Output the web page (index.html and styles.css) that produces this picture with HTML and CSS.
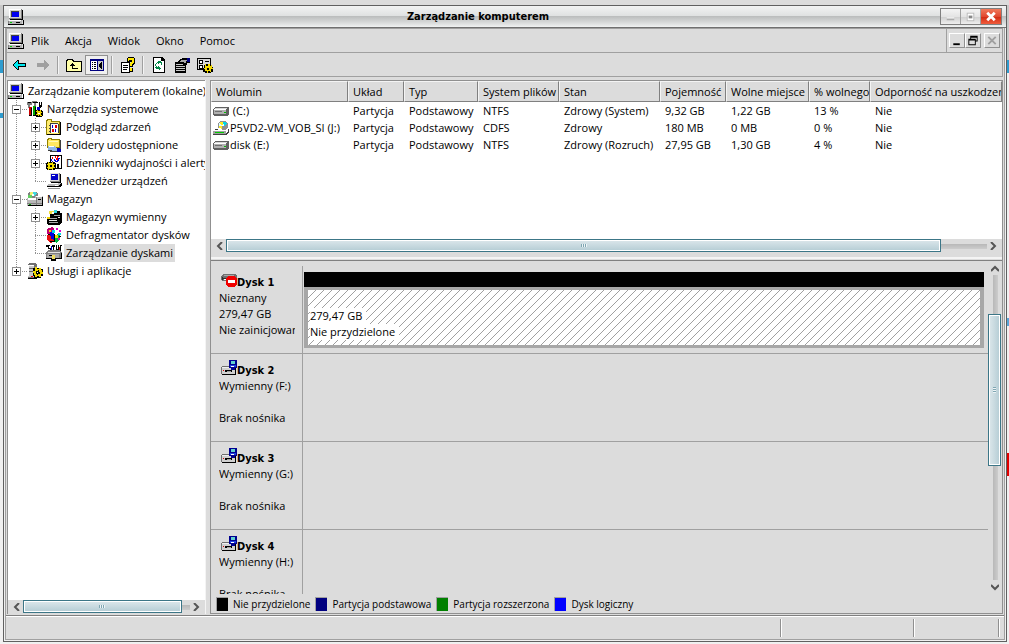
FILE: index.html
```
<!DOCTYPE html>
<html lang="pl">
<head>
<meta charset="utf-8">
<title>Zarządzanie komputerem</title>
<link rel="stylesheet" href="styles.css">
</head>
<body>
<svg class="defs" aria-hidden="true">
  <symbol id="pc" viewBox="0 0 16 16">
    <path fill="#808080" d="M1 0h13v10H1z"/><path fill="#d0d0cc" d="M1 0h12v9H1z"/><path fill="#fff" d="M1 0h12v1H2v8H1z"/><path fill="#000" d="M14 1h1v10H2v-1h12z"/>
    <path fill="#404040" d="M3 2h8v6H3z"/><path fill="#0000f0" d="M4 3h7v5H4z"/><path fill="#b4b4b4" d="M1 11h13v4H0v-3z"/>
    <path fill="#fff" d="M1 11h12v1H1z"/><path fill="#000" d="M0 15h14l1-1v-3h1v4l-1 1H0zM8 13h4v1H8z"/><path fill="#0c0" d="M2 13h2v1H2z"/><path fill="#808080" d="M0 12h1v3H0z"/>
  </symbol>
  <symbol id="tools" viewBox="0 0 16 16">
    <path fill="#808080" d="M0 1h5v3H3v3H1V4H0zM5 0h5v2H9v4H7V2H5z"/><path fill="#000" d="M1 1h3v1H1zM6 1h5v1H6zM12 1h1v3h1V1h1v4l-2 2h-1V5z"/>
    <path fill="#c00" d="M2 6h3v8H2z"/><path fill="#0a0" d="M6 5h3v9H6z"/><path fill="#00c" d="M10 6h3v5h-3z"/><path fill="#000" d="M4 7h1v8H2v-1h2zM8 6h1v9H6v-1h2z"/>
    <path fill="#000" d="M9 9h6v1h1v5h-1v1H9v-1H8v-5h1z"/><path fill="#e8d000" d="M10 9h1v1h2V9h1v2h1v1h-1v2h1v1h-2v-1h-1v1h-1v-1H9v-1h1v-2H9v-1h1z"/><path fill="#fff" d="M11 12h2v1h-2z"/>
  </symbol>
  <symbol id="events" viewBox="0 0 16 16">
    <path fill="#908000" d="M0 1h1V0h5v2h8v14H0z"/><path fill="#ffec70" d="M1 2h1V1h3v2h8v12H1z"/><path fill="#000" d="M14 3h1v13H1v-1h13z"/>
    <path fill="#fff" d="M4 5h8v9H4z"/><path fill="#404040" d="M4 4h8v1H5v9H4zM3 6h1v1H3zM3 9h1v1H3zM3 12h1v1H3zM12 5h1v9h-1z"/><path fill="#e00000" d="M9 6h2v3H9zM6 10h2v3H6z"/><path fill="#0000d0" d="M6 6h1v3H6zM9 10h1v3H9z"/>
  </symbol>
  <symbol id="shared" viewBox="0 0 16 16">
    <path fill="#908000" d="M1 2h1V1h4v1h8v9H1z"/><path fill="#ffe860" d="M2 3h1V2h2v1h8v7H2z"/><path fill="#fff9b8" d="M3 4h9v1H3z"/>
    <path fill="#0000b0" d="M11 11h4v4h-4z"/><path fill="#8fb8e8" d="M2 9h6l3 2v3l-2 1H6l-4-2z"/><path fill="#fff" d="M3 9h5v1H3z"/><path fill="#404040" d="M2 13h3l1 1h5v1H5l-3-1zM14 3h1v9h-1z"/>
  </symbol>
  <symbol id="perf" viewBox="0 0 16 16">
    <path fill="#000" d="M4 0h12v14H4z"/><path fill="#fff" d="M5 1h10v12H5z"/><path fill="#0000e0" d="M5 4h1v2h1v1H6V6H5zM8 4h1v1h1v1h1V4h1V3h2v1h-1v2h-1v1H9V6H8z"/>
    <path fill="#e00" d="M6 2h1v2H6zM9 1h1v2h1V1h2v1h-1v3h-2V3H9z"/><path fill="#000" d="M1 7h8v1h1v6H9v1H1v-1H0V8h1z"/>
    <path fill="#f0dc00" d="M2 7h1v1h3V7h1v2h2v1H8v2h1v1H7v2H6v-1H3v1H2v-2H1v-1h1v-2H1V9h1z"/><path fill="#000" d="M4 10h2v2H4zM11 9h2v4h-2z"/>
  </symbol>
  <symbol id="device" viewBox="0 0 16 16">
    <path fill="#808080" d="M4 0h10v9H4z"/><path fill="#dcdcdc" d="M4 0h9v8H4z"/><path fill="#0000c8" d="M5 1h7v6H5z"/><path fill="#fff" d="M6 2h3v1H6z"/><path fill="#000" d="M14 1h1v9H5V9h9z"/>
    <path fill="#b8b8b8" d="M3 10h12l-2 3H1z"/><path fill="#000" d="M0 13h13l2-3h1v2l-2 2H1z"/><path fill="#fff" d="M3 10h9v1H3zM9 12h3v1H9z"/><path fill="#909090" d="M2 15h12v1H2z"/>
  </symbol>
  <symbol id="storage" viewBox="0 0 16 16">
    <path fill="#808080" d="M2 1h7l2 2v4H1V3z"/><path fill="#f4ef70" d="M3 1h3v4H3z"/><path fill="#40d8e0" d="M6 1h3l1 2-3 2z"/><path fill="#60d060" d="M1 4h4v3H1z"/><path fill="#fff" d="M5 3h2v2H5z"/>
    <path fill="#b8b8b8" d="M0 7h8V5h8v10H0z"/><path fill="#fff" d="M1 7h8V5h6v1h-5v3H1z"/><path fill="#808080" d="M0 12h16v1H0zM9 6h1v8H9z"/><path fill="#000" d="M1 15h15V6h-1v8H1zM11 8h3v1h-3z"/><path fill="#0a0" d="M2 13h2v1H2z"/>
  </symbol>
  <symbol id="removable" viewBox="0 0 16 16">
    <path fill="#000" d="M5 2h9v2h2v9l-2 3H2l-1-3V9h3V5z"/><path fill="#f0dc40" d="M3 2h5v3H3z"/><path fill="#30d8e0" d="M8 1h3v3H8z"/><path fill="#fff" d="M6 3h2v2H6z"/>
    <path fill="#a8a8a8" d="M8 6h6v1H8zM4 9h7v1H4zM3 13h9v1H3z"/><path fill="#e8e8e8" d="M3 11h8v1H3zM12 8h2v1h-2z"/><path fill="#f0d000" d="M1 8h3v2H1z"/>
  </symbol>
  <symbol id="defrag" viewBox="0 0 16 16">
    <path fill="#c00070" d="M1 2l5-2 2 2v5l-5 2-2-2z"/><path fill="#e81010" d="M1 8l4-2 4 2v6l-4 2-4-3z"/><path fill="#0000e0" d="M4 5h4v8l-3-1z"/><path fill="#00b840" d="M8 9l4-2 2 2v4l-4 3-2-2z"/>
    <path fill="#00d8e8" d="M6 3h3v3H6zM12 6h3v2h-3z"/><path fill="#f0e000" d="M9 8h3v3H9zM3 3h2v2H3z"/><path fill="#e000d0" d="M10 1h2v2h-2zM13 3h2v2h-2zM12 11h2v2h-2z"/><path fill="#000" d="M2 7h2v1H2zM4 14h5v1H4zM8 7h1v7H8zM13 9h2v1h-2z"/>
  </symbol>
  <symbol id="diskmgmt" viewBox="0 0 16 16">
    <path fill="#000" d="M0 0h4v1H3v2h2v3H4V4H2V2H0zM6 0h3v2H8v4H7V2H6zM10 0h1v4h1V0h1v5h-2v1h-1zM14 0h2v1h-1v5h-1z"/><path fill="#0000d0" d="M5 1h1v4H5z"/><path fill="#c00" d="M13 2h1v4h-1z"/>
    <path fill="#808080" d="M2 5h12l2 3v6H0V8z"/><path fill="#e0e0e0" d="M2 7h11l1 1H1z"/><path fill="#a8a8a8" d="M1 9h12v4H1z"/><path fill="#000" d="M0 14h6v-1h3v1h7V8h-1v5H9v-3H6v3H0zM3 10h3v1H3z"/><path fill="#f0e060" d="M6 10h3v4H6z"/><path fill="#000" d="M5 14h5v2H5z"/>
  </symbol>
  <symbol id="services" viewBox="0 0 16 16">
    <path fill="#707070" d="M1 1l1-1h6l2 2v13H1z"/><path fill="#c8c8c8" d="M1 2h6v12H1z"/><path fill="#fff" d="M1 2h6v1H2v10H1z"/><path fill="#606060" d="M2 5h5v1H2zM2 8h5v1H2z"/><path fill="#e00" d="M4 13h2v1H4z"/><path fill="#000" d="M1 15h9v1H1z"/>
    <path fill="#000" d="M6 5h8v1h2v7h-2v2H7v-2H6z"/><path fill="#f0d800" d="M8 4h2v2h2V5h2v2h1v2h1v2h-2v3h-2v-1h-2v1H8v-2H7v-2H6V8h2z"/><path fill="#000" d="M9 8h2V7h1v2h1v2h-2v1h-1v-1H9z"/><path fill="#fff" d="M10 9h1v1h-1z"/>
  </symbol>
  <symbol id="drive" viewBox="0 0 16 16">
    <path fill="#606060" d="M2 4h13l1 1v6l-2 2H1l-1-1V6z"/><path fill="#d8d8d8" d="M2 5h12l-1 1H1z"/><path fill="#b0b0b0" d="M1 7h12v4H1z"/><path fill="#fff" d="M1 6h12v1H1z"/><path fill="#707070" d="M2 8h7v1H2z"/><path fill="#0b0" d="M11 9h2v1h-2z"/>
  </symbol>
  <symbol id="cd" viewBox="0 0 16 16">
    <path fill="#909090" d="M7 1h5l3 3v4l-3 2H7L5 8V3z"/><path fill="#d8ffff" d="M7 2h4v4H6V3z"/><path fill="#00d8e8" d="M10 2h2l2 2-3 2z"/><path fill="#ffec20" d="M6 6h3v3H7zM7 2h3v3H8z"/><path fill="#fff" d="M9 5h2v1H9z"/>
    <path fill="#fff" d="M3 8h4l2 2h4v1H1z"/><path fill="#a0a0a0" d="M0 11h13v4H0z"/><path fill="#404040" d="M0 14h13l2-3V9h1v3l-3 3H0zM2 9h3v1H2z"/><path fill="#0c0" d="M2 12h9v1H2z"/>
  </symbol>
  <symbol id="diskerr" viewBox="0 0 16 16">
    <path fill="#707070" d="M2 2h12l2 2v5H2L0 8V5z"/><path fill="#a8a8a8" d="M3 3h10v1H3z"/><path fill="#303030" d="M2 6h4v1H2zM1 5h1v3H1z"/><path fill="#fff" d="M3 7h4v1H3z"/>
    <path fill="#f00000" d="M7 4h7v1h1v1h1v7h-1v1h-1v1H7v-1H6v-1H5V6h1V5h1z"/><path fill="#fff" d="M7 8h7v3H7z"/>
  </symbol>
  <symbol id="diskrem" viewBox="0 0 16 16">
    <path fill="#707070" d="M1 6h14v9H1L0 14V8z"/><path fill="#f0f0f0" d="M1 7h13v1H1z"/><path fill="#d0d0d0" d="M1 8h13v6H1z"/><path fill="#000" d="M4 10h7v2H4zM14 8h1v7H1v-1h13z"/><path fill="#a0a0a0" d="M6 11h4v1H6z"/><path fill="#d00" d="M2 10h1v1H2z"/>
    <path fill="#000090" d="M8 0h7l1 1v7h-2v2h-4V8H8z"/><path fill="#60d0d0" d="M10 1h4v3h-4z"/><path fill="#2040e0" d="M9 5h6v2H9z"/><path fill="#fff" d="M10 6h3v1h-3z"/>
  </symbol>
  <symbol id="back" viewBox="0 0 16 16"><path fill="#000" d="M7 3v3h7v4H7v3H5v-1H4v-1H3v-1H2V9H1V7h1V6h1V5h1V4h1V3z"/><path fill="#00e8f0" d="M6 4v3h7v2H6v3H5v-1H4v-1H3V9H2V7h1V6h1V5h1V4z"/></symbol>
  <symbol id="forward" viewBox="0 0 16 16"><path fill="#a0a0a0" d="M9 3v3H2v4h7v3h1v-1h1v-1h1v-1h1V9h1V7h-1V6h-1V5h-1V4h-1V3z"/></symbol>
  <symbol id="up" viewBox="0 0 16 16"><path fill="#000" d="M1 2h6v1h1v1h8v11H0V3h1z"/><path fill="#ffffa8" d="M2 3h4v1h1v1h8v9H1V4h1z"/><path fill="#000" d="M6 6h1v1h1v1h1v1H7v2h5v1H6V9H4V8h1V7h1z"/></symbol>
  <symbol id="panes" viewBox="0 0 16 16"><path fill="#000080" d="M1 2h14v12H1z"/><path fill="#fff" d="M2 4h6v9H2z"/><path fill="#c8c8c8" d="M9 4h5v9H9z"/><path fill="#000" d="M3 5h1v1H3zM3 7h1v1H3zM3 9h1v1H3zM3 11h1v1H3zM5 5h2v1H5zM5 7h2v1H5zM5 9h2v1H5zM5 11h2v1H5zM13 5v7h-1v-1h-1v-1h-1V7h1V6h1V5z"/></symbol>
  <symbol id="help" viewBox="0 0 16 16"><path fill="#000" d="M1 5h9v11H1z"/><path fill="#fff" d="M2 6h7v9H2z"/><path fill="#000" d="M3 8h5v1H3zM3 10h5v1H3zM3 12h4v1H3zM7 1h1V0h6v1h1v6h-1v1h-1v2H9V6h2V5H7z"/><path fill="#ffe800" d="M8 1h6v5h-1v1h-1v2h-2V6h1V5h1V3H9v1H8z"/><path fill="#000" d="M9 11h4v4H9z"/><path fill="#ffe800" d="M10 11h2v3h-2z"/></symbol>
  <symbol id="refresh" viewBox="0 0 16 16"><path fill="#000" d="M2 0h9l3 3v13H2z"/><path fill="#fff" d="M3 1h7v3h3v11H3z"/><path fill="#008848" d="M8 3v1h2v1h1v3h-1V6H8v1H7V6H6V5h1V4h1zM5 6h1v1H5zM4 7h1v2H4zM8 9v1h1v1h1v1H9v1H8v-1H5v-1H4v-1h1v-1h1v1h1V9z"/></symbol>
  <symbol id="props" viewBox="0 0 16 16"><path fill="#000" d="M1 5h11v11H1z"/><path fill="#c8c8c8" d="M2 7h8v1H2zM2 9h9v1H2zM2 11h9v1H2zM2 13h9v1H2z"/><path fill="#000" d="M6 2h2V1h8v5h-3v2H9V7H4V5z"/><path fill="#a8a8a8" d="M7 3h6v1h-1v2h-2V5H6z"/><path fill="#000080" d="M13 1h3v4h-3z"/></symbol>
  <symbol id="settings" viewBox="0 0 16 16"><path fill="#000" d="M0 1h14v12H0z"/><path fill="#d8d8d8" d="M1 2h12v10H1z"/><path fill="#000" d="M2 3h4v4H2zM8 4h4v1H8zM2 8h4v4H2zM8 7h3v1H8z"/><path fill="#fff" d="M3 4h2v2H3zM3 9h2v2H3z"/><path fill="#000" d="M7 8h8v2h1v5h-2v1H8v-1H6v-4h1z"/><path fill="#f0d800" d="M8 7h1v2h2V7h2v2h1V8h1v3h1v1h-2v3h-1v-1h-2v2h-1v-2H8v-2H7v-1h1z"/><path fill="#000" d="M10 11h2v2h-2z"/></symbol>
  <symbol id="chev" viewBox="0 0 8 8"><path fill="none" stroke="#555" stroke-width="2" d="M6 0L2 4l4 4"/></symbol>
</svg>

<div class="window">
  <header class="titlebar">
    <svg class="ico"><use href="#pc"/></svg>
    <h1>Zarządzanie komputerem</h1>
    <div class="winbtns">
      <button aria-label="Minimalizuj"><svg viewBox="0 0 20 16"><path fill="#aaa" d="M6 10h8v2H6z"/><path fill="#fff" d="M6 9h8v1H6z"/></svg></button>
      <button aria-label="Maksymalizuj"><svg viewBox="0 0 20 16"><path fill="#bbb" d="M6 4h8v9H6z"/><path fill="#fff" d="M7 5h6v7H7z"/><path fill="#888" d="M8 7h4v3H8z"/></svg></button>
      <button class="close" aria-label="Zamknij"><svg viewBox="0 0 20 16"><path fill="none" stroke="#fff" stroke-width="3" d="M6 4l8 8M14 4l-8 8"/></svg></button>
    </div>
  </header>

  <div class="bars">
    <nav class="menubar">
      <svg class="ico"><use href="#pc"/></svg>
      <button>Plik</button><button>Akcja</button><button>Widok</button><button>Okno</button><button>Pomoc</button>
      <div class="mdi">
        <button aria-label="Minimalizuj okno"><svg viewBox="0 0 14 14"><path fill="#000" d="M3 10h7v2H3z"/></svg></button>
        <button aria-label="Przywróć okno"><svg viewBox="0 0 14 14"><path fill="#000" d="M4 2h8v6h-2V7h1V4H5v1H4zM2 5h8v7H2zM3 7v4h6V7z" fill-rule="evenodd"/></svg></button>
        <button aria-label="Zamknij okno" disabled><svg viewBox="0 0 14 14"><path fill="none" stroke="#a0a0a0" stroke-width="2" d="M3 3l8 8M11 3l-8 8"/></svg></button>
      </div>
    </nav>
    <div class="toolbar">
      <button aria-label="Wstecz"><svg class="ico"><use href="#back"/></svg></button>
      <button aria-label="Dalej" disabled><svg class="ico"><use href="#forward"/></svg></button>
      <i></i>
      <button aria-label="W górę"><svg class="ico"><use href="#up"/></svg></button>
      <button class="on" aria-label="Pokaż drzewo konsoli"><svg class="ico"><use href="#panes"/></svg></button>
      <i></i>
      <button aria-label="Pomoc"><svg class="ico"><use href="#help"/></svg></button>
      <i></i>
      <button aria-label="Odśwież"><svg class="ico"><use href="#refresh"/></svg></button>
      <button aria-label="Właściwości"><svg class="ico"><use href="#props"/></svg></button>
      <button aria-label="Ustawienia"><svg class="ico"><use href="#settings"/></svg></button>
    </div>
  </div>

  <main>
    <aside class="treepane">
      <div class="tree">
        <div class="node"><svg class="ico"><use href="#pc"/></svg><span>Zarządzanie komputerem (lokalne)</span></div>
        <div class="node"><b class="g v h"><button class="minus" aria-label="Zwiń"></button></b><svg class="ico"><use href="#tools"/></svg><span>Narzędzia systemowe</span></div>
        <div class="node"><b class="g v"></b><b class="g v h"><button class="plus" aria-label="Rozwiń"></button></b><svg class="ico"><use href="#events"/></svg><span>Podgląd zdarzeń</span></div>
        <div class="node"><b class="g v"></b><b class="g v h"><button class="plus" aria-label="Rozwiń"></button></b><svg class="ico"><use href="#shared"/></svg><span>Foldery udostępnione</span></div>
        <div class="node"><b class="g v"></b><b class="g v h"><button class="plus" aria-label="Rozwiń"></button></b><svg class="ico"><use href="#perf"/></svg><span>Dzienniki wydajności i alerty</span></div>
        <div class="node"><b class="g v"></b><b class="g e h"></b><svg class="ico"><use href="#device"/></svg><span>Menedżer urządzeń</span></div>
        <div class="node"><b class="g v h"><button class="minus" aria-label="Zwiń"></button></b><svg class="ico"><use href="#storage"/></svg><span>Magazyn</span></div>
        <div class="node"><b class="g v"></b><b class="g v h"><button class="plus" aria-label="Rozwiń"></button></b><svg class="ico"><use href="#removable"/></svg><span>Magazyn wymienny</span></div>
        <div class="node"><b class="g v"></b><b class="g v h"></b><svg class="ico"><use href="#defrag"/></svg><span>Defragmentator dysków</span></div>
        <div class="node"><b class="g v"></b><b class="g e h"></b><svg class="ico"><use href="#diskmgmt"/></svg><span class="sel">Zarządzanie dyskami</span></div>
        <div class="node"><b class="g e h"><button class="plus" aria-label="Rozwiń"></button></b><svg class="ico"><use href="#services"/></svg><span>Usługi i aplikacje</span></div>
      </div>
      <div class="hscroll">
        <button class="l" aria-label="W lewo"><svg><use href="#chev"/></svg></button>
        <div class="track"><div class="thumb tree-thumb"></div></div>
        <button class="r" aria-label="W prawo"><svg><use href="#chev"/></svg></button>
      </div>
    </aside>

    <section class="detail">
      <div class="volumes">
        <table>
          <colgroup><col class="c1"><col class="c2"><col class="c3"><col class="c4"><col class="c5"><col class="c6"><col class="c7"><col class="c8"><col></colgroup>
          <thead><tr><th>Wolumin</th><th>Układ</th><th>Typ</th><th>System plików</th><th>Stan</th><th>Pojemność</th><th>Wolne miejsce</th><th>% wolnego</th><th>Odporność na uszkodzenia</th></tr></thead>
          <tbody>
            <tr><td><div><svg class="ico"><use href="#drive"/></svg>&nbsp;(C:)</div></td><td>Partycja</td><td>Podstawowy</td><td>NTFS</td><td>Zdrowy (System)</td><td>9,32 GB</td><td>1,22 GB</td><td>13 %</td><td>Nie</td></tr>
            <tr><td><div><svg class="ico"><use href="#cd"/></svg>P5VD2-VM_VOB_SI (J:)</div></td><td>Partycja</td><td>Podstawowy</td><td>CDFS</td><td>Zdrowy</td><td>180 MB</td><td>0 MB</td><td>0 %</td><td>Nie</td></tr>
            <tr><td><div><svg class="ico"><use href="#drive"/></svg>disk (E:)</div></td><td>Partycja</td><td>Podstawowy</td><td>NTFS</td><td>Zdrowy (Rozruch)</td><td>27,95 GB</td><td>1,30 GB</td><td>4 %</td><td>Nie</td></tr>
          </tbody>
        </table>
      </div>
      <div class="hscroll">
        <button class="l" aria-label="W lewo"><svg><use href="#chev"/></svg></button>
        <div class="track"><div class="thumb vol-thumb"></div></div>
        <button class="r" aria-label="W prawo"><svg><use href="#chev"/></svg></button>
      </div>
      <div class="splitter"></div>
      <div class="diskarea">
        <div class="disks">
          <div class="disk">
            <div class="label"><strong><svg class="ico"><use href="#diskerr"/></svg>Dysk 1</strong><p>Nieznany</p><p>279,47 GB</p><p>Nie zainicjowany</p></div>
            <div class="parts">
              <div class="strip"></div>
              <div class="part">
                <svg class="hatch" aria-hidden="true"><defs><pattern id="h" width="8" height="8" patternUnits="userSpaceOnUse"><path fill="#a0a0a0" d="M7 0h1v1H7zM6 1h1v1H6zM5 2h1v1H5zM4 3h1v1H4zM3 4h1v1H3zM2 5h1v1H2zM1 6h1v1H1zM0 7h1v1H0z"/></pattern></defs><rect width="100%" height="100%" fill="url(#h)"/></svg>
                <p>279,47 GB</p><p>Nie przydzielone</p>
              </div>
            </div>
          </div>
          <div class="disk"><div class="label"><strong><svg class="ico"><use href="#diskrem"/></svg>Dysk 2</strong><p>Wymienny (F:)</p><p>&nbsp;</p><p>Brak nośnika</p></div></div>
          <div class="disk"><div class="label"><strong><svg class="ico"><use href="#diskrem"/></svg>Dysk 3</strong><p>Wymienny (G:)</p><p>&nbsp;</p><p>Brak nośnika</p></div></div>
          <div class="disk"><div class="label"><strong><svg class="ico"><use href="#diskrem"/></svg>Dysk 4</strong><p>Wymienny (H:)</p><p>&nbsp;</p><p>Brak nośnika</p></div></div>
        </div>
        <div class="vscroll">
          <button class="u" aria-label="W górę"><svg><use href="#chev"/></svg></button>
          <div class="track"><div class="thumb"></div></div>
          <button class="d" aria-label="W dół"><svg><use href="#chev"/></svg></button>
        </div>
      </div>
      <div class="legend">
        <span class="k black">Nie przydzielone</span><span class="k navy">Partycja podstawowa</span><span class="k green">Partycja rozszerzona</span><span class="k blue">Dysk logiczny</span>
      </div>
    </section>
  </main>
  <footer><span></span><span></span><span></span></footer>
</div>
</body>
</html>
```
FILE: styles.css
```
* { box-sizing: border-box; }
html, body { height: 100%; }
body {
  margin: 0;
  padding: 5px 2px 2px 3px;
  overflow: hidden;
  font: 11px/16px "Open Sans", "Noto Sans", sans-serif;
  color: #000;
  background:
    linear-gradient(#dcdcdc, #dcdcdc) 0 0 / 100% 5px no-repeat,
    linear-gradient(#2f9ccf, #2f9ccf) 0 60px / 3px 13px no-repeat,
    linear-gradient(#2f9ccf, #2f9ccf) 0 113px / 3px 5px no-repeat,
    linear-gradient(#2f9ccf, #2f9ccf) 100% 60px / 2px 13px no-repeat,
    linear-gradient(#5aa5d8, #5aa5d8) 100% 318px / 2px 8px no-repeat,
    linear-gradient(#e00000, #e00000) 100% 453px / 2px 23px no-repeat,
    linear-gradient(#c8c8c8, #c8c8c8) 0 5px / 100% 55px no-repeat,
    #f0f0f0;
}
button { font: inherit; color: inherit; border: 0; padding: 0; margin: 0; background: none; }
p, h1 { margin: 0; }
.defs { display: none; }
.ico { width: 16px; height: 16px; flex: none; display: block; shape-rendering: crispEdges; }

.window {
  height: 100%;
  display: flex;
  flex-direction: column;
  border: 1px solid #606060;
  background: #dcdcdc;
  box-shadow: inset 0 0 0 1px #f0f0f0, inset 0 0 0 2px #a0a0a0;
}
.titlebar {
  height: 22px;
  flex: none;
  display: flex;
  align-items: center;
  padding: 0 4px;
  border-bottom: 1px solid #707070;
  background: linear-gradient(#f2f3f3, #dfe1e1 48%, #bcbebe 50%, #d4d6d6 75%, #f0f2f2);
}
.titlebar h1 { flex: 1; padding-right: 8px; font: bold 11px/16px "DejaVu Sans Condensed", "Noto Sans", sans-serif; text-align: center; }
.winbtns { display: flex; border: 1px solid #808080; }
.winbtns button { width: 20px; height: 15px; border-right: 1px solid #a0a0a0; background: linear-gradient(#f4f4f4, #e4e4e4 50%, #cfcfcf 52%, #eee); }
.winbtns .close { border: 0; background: linear-gradient(#f07a5c, #e04830 50%, #d02a12 52%, #f05c3c); }
.winbtns svg, .mdi svg { display: block; width: 100%; height: 100%; }

.bars { flex: none; margin: 0 3px 0 2px; border: 1px solid #a0a0a0; }
.menubar { height: 24px; display: flex; align-items: center; padding-left: 1px; border-bottom: 1px solid #a0a0a0; }
.menubar > button { margin-left: 16px; }
.menubar .ico + button { margin-left: 7px; }
.mdi { align-self: stretch; margin-left: auto; padding: 0 2px; display: flex; align-items: center; border-left: 1px solid #a0a0a0; }
.mdi button { width: 16px; height: 15px; border: 1px solid; border-color: #fff #909090 #909090 #fff; }
.mdi button:last-child { margin-left: 3px; }
.toolbar { height: 23px; display: flex; align-items: center; padding-left: 1px; }
.toolbar button { width: 23px; height: 20px; display: flex; align-items: center; justify-content: center; }
.toolbar .on { border: 1px solid #909090; background: #f0f0f0; }
.toolbar i { width: 2px; height: 18px; margin: 0 3px; background: #a0a0a0; border-right: 1px solid #f4f4f4; }

main { flex: 1; min-height: 0; display: flex; gap: 5px; margin: 3px 3px 1px; }
.treepane { width: 198px; flex: none; display: flex; flex-direction: column; border: solid #909090; border-width: 1px 0 0 1px; box-shadow: 1px 0 #f4f4f4; }
.tree { flex: 1; min-height: 0; overflow: hidden; padding-top: 1px; background: #fff; }
.node { height: 18px; display: flex; align-items: center; white-space: nowrap; }
.node span { padding: 0 2px; margin-left: 2px; height: 18px; line-height: 18px; }
.node .sel { background: #dcdcdc; }
.g {
  --dots: repeating-linear-gradient(to bottom, #909090 0 1px, transparent 1px 2px);
  --dash: repeating-linear-gradient(to right, #909090 0 1px, transparent 1px 2px);
  width: 19px; height: 18px; flex: none; padding: 5px 0 0 4px; background-repeat: no-repeat;
}
.g.v { background-image: var(--dots); background-position: 8px 0; background-size: 1px 18px; }
.g.v.h { background-image: var(--dots), var(--dash); background-position: 8px 0, 8px 9px; background-size: 1px 18px, 11px 1px; }
.g.e { background-image: var(--dots), var(--dash); background-position: 8px 0, 8px 9px; background-size: 1px 9px, 11px 1px; }
.g button { display: block; width: 9px; height: 9px; border: 1px solid #909090; }
.minus { background: linear-gradient(#000, #000) center / 5px 1px no-repeat #fff; }
.plus { background: linear-gradient(#000, #000) center / 5px 1px no-repeat, linear-gradient(#000, #000) center / 1px 5px no-repeat #fff; }

.hscroll { height: 14px; flex: none; display: flex; background: #dcdcdc; }
.hscroll button { width: 15px; display: flex; align-items: center; justify-content: center; }
.hscroll .l { padding-left: 3px; }
.hscroll .r { padding-right: 3px; }
.hscroll svg, .vscroll svg { width: 8px; height: 8px; }
.r svg { transform: rotate(180deg); }
.u svg { transform: rotate(90deg); }
.d svg { transform: rotate(-90deg); }
.track { flex: 1; min-width: 0; background: linear-gradient(#b8b8b8, #ccc) 0 5px / 100% 5px no-repeat; }
.thumb { position: relative; height: 13px; border: 1px solid #3c7687; box-shadow: inset 0 0 0 1px #fff; background: linear-gradient(#dce7eb, #b4ccd4); }
.thumb::after { content: ""; position: absolute; inset: 4px calc(50% - 3px); background: repeating-linear-gradient(to right, #7fa6b2 0 1px, #eef4f6 1px 2px); }
.tree-thumb { width: 95%; }
.vol-thumb { width: 94%; }

.detail { flex: 1; min-width: 0; display: flex; flex-direction: column; border: 1px solid #909090; }
.volumes { height: 158px; flex: none; overflow: hidden; background: #fff; }
table { width: 100%; table-layout: fixed; border-collapse: separate; border-spacing: 0; }
.c1 { width: 137px; } .c2 { width: 56px; } .c3 { width: 74px; } .c4 { width: 81px; } .c5 { width: 101px; }
.c6 { width: 66px; } .c7 { width: 83px; } .c8 { width: 61px; }
th { height: 21px; padding: 0 0 0 4px; font-weight: normal; text-align: left; white-space: nowrap; overflow: hidden; background: #dcdcdc; border: 1px solid; border-color: #f4f4f4 #808080 #808080 #f4f4f4; }
td { height: 17px; padding: 0 0 0 5px; line-height: 17px; white-space: nowrap; }
td:first-child { padding-left: 2px; }
td div { display: flex; align-items: center; gap: 1px; }
.splitter { height: 8px; flex: none; border-bottom: 1px solid #808080; background: linear-gradient(#f4f4f4, #f4f4f4) 0 4px / 100% 2px no-repeat; }

.diskarea { flex: 1; min-height: 0; display: flex; }
.disks { flex: 1; min-width: 0; overflow: hidden; padding-top: 5px; }
.disk { height: 88px; display: flex; border-bottom: 1px solid #a0a0a0; }
.label { width: 92px; flex: none; padding: 9px 7px 0 8px; overflow: hidden; white-space: nowrap; border-right: 1px solid #a0a0a0; }
.label p { overflow: hidden; }
.label strong { display: flex; height: 15px; padding-left: 2px; font: bold 11px/16px "DejaVu Sans Condensed", "Noto Sans", sans-serif; }
.label strong .ico { margin-top: -3px; }
.parts { flex: 1; padding: 6px 4px 4px 1px; }
.strip { height: 15px; background: #000; }
.part { position: relative; height: 61px; padding: 18px 2px 0; border: solid #a7a7a7; border-width: 3px 4px; background: #fff; }
.part p { position: relative; width: max-content; padding-right: 4px; background: #fff; }
.hatch { position: absolute; inset: 0; width: 100%; height: 100%; shape-rendering: crispEdges; }

.vscroll { width: 14px; flex: none; display: flex; flex-direction: column; }
.vscroll button { height: 14px; display: flex; align-items: center; justify-content: center; }
.vscroll .u { padding-top: 2px; }
.vscroll .track { padding-top: 39px; background: linear-gradient(to right, #b8b8b8, #ccc) 5px 0 / 5px 100% no-repeat; }
.vscroll .thumb { width: 13px; height: 152px; background: linear-gradient(to right, #dce7eb, #b4ccd4); }
.vscroll .thumb::after { inset: calc(50% - 3px) 4px; background: repeating-linear-gradient(to bottom, #7fa6b2 0 1px, #eef4f6 1px 2px); }

.legend { height: 19px; flex: none; display: flex; gap: 5px; padding-left: 5px; font: 10px/18px "Open Sans", "Noto Sans", sans-serif; white-space: nowrap; }
.k { display: flex; align-items: center; gap: 5px; }
.k::before { content: ""; width: 11px; height: 13px; border: solid #a0a0a0; border-width: 1px 0 0 1px; background: currentColor; }
.black::before { background: #000; }
.navy::before { background: #000080; }
.green::before { background: #008000; }
.blue::before { background: #0000ff; }

footer { height: 25px; flex: none; display: flex; justify-content: flex-end; padding: 3px 4px 3px; margin: 0 2px 1px; border-top: 1px solid #808080; box-shadow: inset 0 1px #fff; }
footer span { width: 133px; border-left: 1px solid #909090; box-shadow: inset 1px 0 #fff; }
footer span:nth-child(2) { width: 85px; }
footer span:last-child { width: 2px; }
```
